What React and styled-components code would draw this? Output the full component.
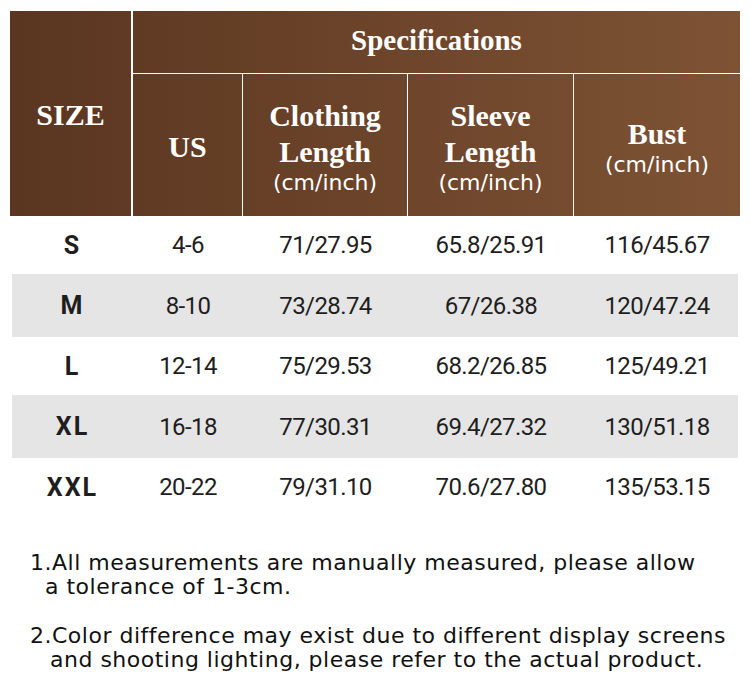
import React from 'react'
import styled, { createGlobalStyle } from 'styled-components'

const GlobalStyle = createGlobalStyle`
  html, body { margin: 0; padding: 0; background: #fff; }
  body { width: 750px; height: 698px; overflow: hidden; }
`

const rows = [
  ['S', '4-6', '71/27.95', '65.8/25.91', '116/45.67'],
  ['M', '8-10', '73/28.74', '67/26.38', '120/47.24'],
  ['L', '12-14', '75/29.53', '68.2/26.85', '125/49.21'],
  ['XL', '16-18', '77/30.31', '69.4/27.32', '130/51.18'],
  ['XXL', '20-22', '79/31.10', '70.6/27.80', '135/53.15'],
]

function App() {
  return (
    <Page>
      <GlobalStyle />
      <Header>
        <SizeCell>SIZE</SizeCell>
        <SpecCell>Specifications</SpecCell>
        <HeadCell>US</HeadCell>
        <HeadCell>
          <span>Clothing</span>
          <span>Length</span>
          <Unit>(cm/inch)</Unit>
        </HeadCell>
        <HeadCell>
          <span>Sleeve</span>
          <span>Length</span>
          <Unit>(cm/inch)</Unit>
        </HeadCell>
        <HeadCell $last>
          <span>Bust</span>
          <Unit>(cm/inch)</Unit>
        </HeadCell>
      </Header>

      <Body>
        {rows.map((r, i) => (
          <Row key={r[0]} $striped={i % 2 === 1}>
            {r.map((v, j) => (
              <Cell key={j} $bold={j === 0}>{v}</Cell>
            ))}
          </Row>
        ))}
      </Body>

      <Notes>
        <Note>
          <Line>1.All measurements are manually measured, please allow</Line>
          <Line $indent={15}>a tolerance of 1-3cm.</Line>
        </Note>
        <Note>
          <Line>2.Color difference may exist due to different display screens</Line>
          <Line $indent={20}>and shooting lighting, please refer to the actual product.</Line>
        </Note>
      </Notes>
    </Page>
  )
}

export default App

const Page = styled.div`
  width: 730px;
  padding: 11px 10px 0;
`

const Header = styled.div`
  display: grid;
  grid-template-columns: 123px 110px 165px 166px 166px;
  grid-template-rows: 63px 142px;
  background: linear-gradient(to right, #5a3520, #7e5334);
  color: #fff;
  font-family: "Liberation Serif", "Times New Roman", serif;
  font-weight: 700;
`

const SizeCell = styled.div`
  grid-row: 1 / span 2;
  display: flex;
  align-items: center;
  justify-content: center;
  border-right: 2px solid #fff;
  font-size: 30px;
  padding-top: 2px;
`

const SpecCell = styled.div`
  grid-column: 2 / span 4;
  display: flex;
  align-items: center;
  justify-content: center;
  border-bottom: 1.5px solid #fff;
  font-size: 29px;
  padding-bottom: 4px;
`

const HeadCell = styled.div`
  display: flex;
  flex-direction: column;
  align-items: center;
  justify-content: center;
  border-right: ${p => (p.$last ? 'none' : '1px solid #fff')};
  font-size: 30px;
  line-height: 36px;
  padding-top: 4px;
`

const Unit = styled.span`
  font-family: "DejaVu Sans", sans-serif;
  font-weight: 400;
  font-size: 22px;
  line-height: 26px;
`

const Body = styled.div`
  display: flex;
  flex-direction: column;
`

const Row = styled.div`
  display: grid;
  grid-template-columns: 121px 110px 165px 166px 166px;
  height: ${p => (p.$striped ? 63 : 58)}px;
  margin: 0 2px;
  background: ${p => (p.$striped ? '#e5e5e5' : '#fff')};
`

const Cell = styled.div`
  display: flex;
  align-items: center;
  justify-content: center;
  font-family: Roboto, "Noto Sans", sans-serif;
  font-size: ${p => (p.$bold ? 25 : 24)}px;
  font-weight: ${p => (p.$bold ? 700 : 400)};
  letter-spacing: ${p => (p.$bold ? '2px' : '-0.6px')};
  color: #1e1e1e;
`

const Notes = styled.div`
  display: flex;
  flex-direction: column;
  gap: 25px;
  margin-top: 35px;
  padding-left: 20px;
  font-family: "DejaVu Sans", sans-serif;
  font-size: 22px;
  letter-spacing: 0.5px;
  line-height: 24px;
  color: #111;
`

const Note = styled.div`
  display: flex;
  flex-direction: column;
`

const Line = styled.div`
  padding-left: ${p => p.$indent || 0}px;
  white-space: nowrap;
`
